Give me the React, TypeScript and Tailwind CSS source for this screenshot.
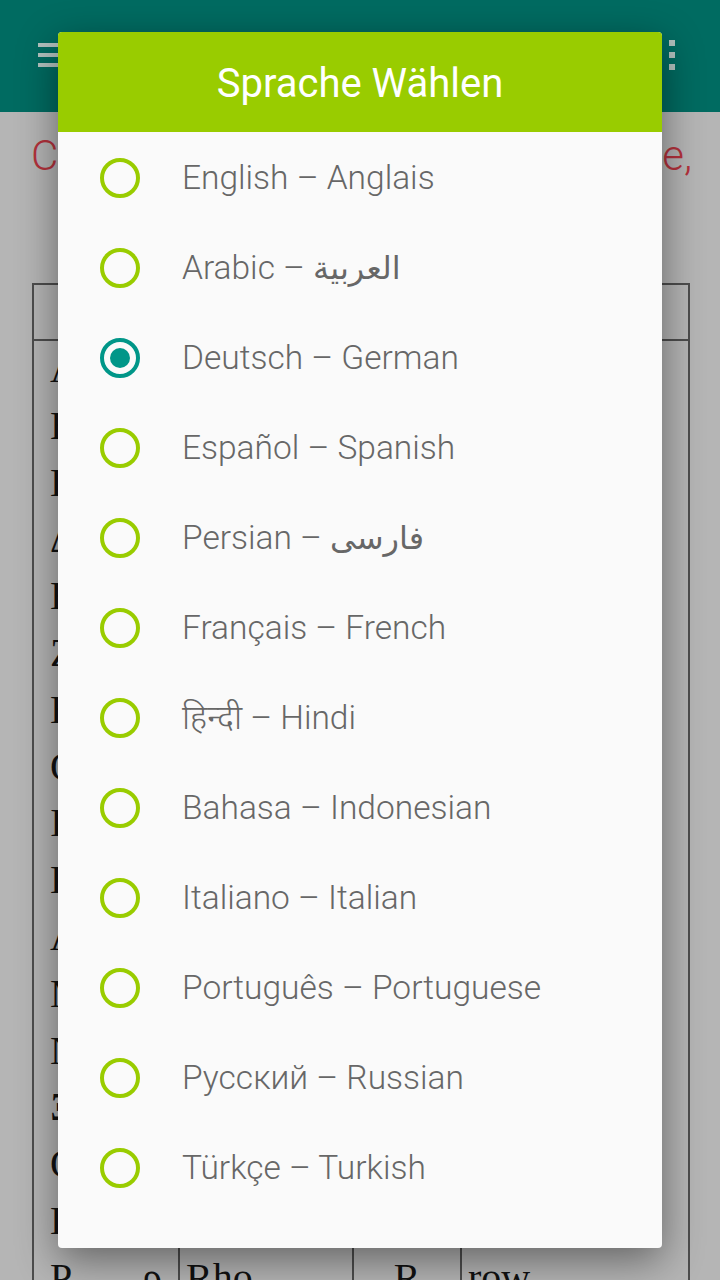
import React from "react";

const greek: [string, string, string, string, string][] = [
  ["Α", "α", "Alpha", "A", "al-fa"],
  ["Β", "β", "Beta", "B", "bay-ta"],
  ["Γ", "γ", "Gamma", "G", "gam-ma"],
  ["Δ", "δ", "Delta", "D", "del-ta"],
  ["Ε", "ε", "Epsilon", "E", "ep-si-lon"],
  ["Ζ", "ζ", "Zeta", "Z", "zay-ta"],
  ["Η", "η", "Eta", "H", "ay-ta"],
  ["Θ", "θ", "Theta", "Th", "thay-ta"],
  ["Ι", "ι", "Iota", "I", "eye-o-ta"],
  ["Κ", "κ", "Kappa", "K", "cap-pa"],
  ["Λ", "λ", "Lambda", "L", "lamb-da"],
  ["Μ", "μ", "Mu", "M", "mew"],
  ["Ν", "ν", "Nu", "N", "new"],
  ["Ξ", "ξ", "Xi", "X", "zie"],
  ["Ο", "ο", "Omicron", "O", "om-i-cron"],
  ["Π", "π", "Pi", "P", "pie"],
  ["Ρ", "ρ", "Rho", "R", "row"],
  ["Σ", "σ", "Sigma", "S", "sig-ma"],
];

const languages: [string, string][] = [
  ["English", "Anglais"],
  ["Arabic", "العربية"],
  ["Deutsch", "German"],
  ["Español", "Spanish"],
  ["Persian", "فارسی"],
  ["Français", "French"],
  ["हिन्दी", "Hindi"],
  ["Bahasa", "Indonesian"],
  ["Italiano", "Italian"],
  ["Português", "Portuguese"],
  ["Русский", "Russian"],
  ["Türkçe", "Turkish"],
];

function Radio({ checked }: { checked: boolean }) {
  if (checked) {
    return (
      <div className="w-[40px] h-[40px] rounded-full border-[4px] border-[#009688] flex items-center justify-center shrink-0">
        <div className="w-[20px] h-[20px] rounded-full bg-[#009688]" />
      </div>
    );
  }
  return <div className="w-[40px] h-[40px] rounded-full border-[4px] border-[#99cc00] shrink-0" />;
}

const isRtl = (s: string) => /[\u0600-\u06FF]/.test(s);

export default function App() {
  return (
    <div className="relative w-[720px] h-[1280px] overflow-hidden bg-[#b5b5b5]">
      {/* App bar */}
      <div className="h-[112px] bg-[#006b61] flex items-start justify-between">
        <div className="ml-[38px] mt-[43px] flex flex-col gap-[6px]">
          <div className="w-[36px] h-[4px] bg-[#b3c2bf]" />
          <div className="w-[36px] h-[4px] bg-[#b3c2bf]" />
          <div className="w-[36px] h-[4px] bg-[#b3c2bf]" />
        </div>
        <div className="mr-[45px] mt-[40px] flex flex-col gap-[6px]">
          <div className="w-[6px] h-[6px] bg-[#b3c2bf]" />
          <div className="w-[6px] h-[6px] bg-[#b3c2bf]" />
          <div className="w-[6px] h-[6px] bg-[#b3c2bf]" />
        </div>
      </div>

      {/* Page content */}
      <div
        className="pt-[20px] pl-[31px] pr-[28px] flex justify-between text-[42px] leading-[48px] text-[#b3323c] font-light"
        style={{ fontFamily: "Roboto, 'Open Sans', sans-serif" }}
      >
        <span>Choose</span>
        <span>please,</span>
      </div>

      <table
        className="ml-[32px] mt-[103px] w-[656px] table-fixed border-collapse border-2 border-[#4d4d4d] text-[#111] text-[40px]"
        style={{ fontFamily: "'Liberation Serif', 'DejaVu Serif', serif" }}
      >
        <colgroup>
          <col className="w-[146px]" />
          <col className="w-[174px]" />
          <col className="w-[108px]" />
          <col className="w-[228px]" />
        </colgroup>
        <thead>
          <tr className="h-[56px] border-b-2 border-[#4d4d4d]">
            <th className="border-x-2 border-[#4d4d4d] text-center text-[28px] font-normal">Letter</th>
            <th className="border-x-2 border-[#4d4d4d] text-center text-[28px] font-normal">Name</th>
            <th className="border-x-2 border-[#4d4d4d] text-center text-[28px] font-normal">Eng</th>
            <th className="border-x-2 border-[#4d4d4d] text-center text-[28px] font-normal">Sound</th>
          </tr>
        </thead>
        <tbody>
          {greek.map(([u, l, name, eng, pr]) => (
            <tr key={name} className="h-[56.8px] leading-[56.8px]">
              <td className="border-x-2 border-[#4d4d4d] px-[16px]">
                <div className="flex justify-between">
                  <span>{u}</span>
                  <span>{l}</span>
                </div>
              </td>
              <td className="border-x-2 border-[#4d4d4d] pl-[6px]">{name}</td>
              <td className="border-x-2 border-[#4d4d4d] text-center">{eng}</td>
              <td className="border-x-2 border-[#4d4d4d] pl-[6px]">{pr}</td>
            </tr>
          ))}
        </tbody>
      </table>

      {/* Dialog */}
      <div
        className="absolute left-[58px] top-[32px] w-[604px] h-[1216px] bg-[#fafafa] rounded-[4px] shadow-[0_12px_40px_rgba(0,0,0,0.45)] flex flex-col"
        style={{ fontFamily: "Roboto, 'Noto Sans', sans-serif" }}
      >
        <div className="h-[100px] bg-[#99cc00] rounded-t-[4px] flex items-center justify-center pt-[4px]">
          <span className="text-white text-[40px]">Sprache Wählen</span>
        </div>
        <div className="flex flex-col pt-[1px]">
          {languages.map(([a, b], i) => (
            <div key={a} className="h-[90px] flex items-center pl-[42px]">
              <Radio checked={i === 2} />
              <span className="ml-[42px] text-[33.5px] font-light text-[#676767] whitespace-nowrap">
                {isRtl(b) ? (
                  <>
                    {a} –{" "}
                    <span
                      className="font-normal text-[32px]"
                      style={{ fontFamily: "'DejaVu Sans', sans-serif" }}
                    >
                      {b}
                    </span>
                  </>
                ) : (
                  <>
                    {a} – {b}
                  </>
                )}
              </span>
            </div>
          ))}
        </div>
      </div>
    </div>
  );
}
